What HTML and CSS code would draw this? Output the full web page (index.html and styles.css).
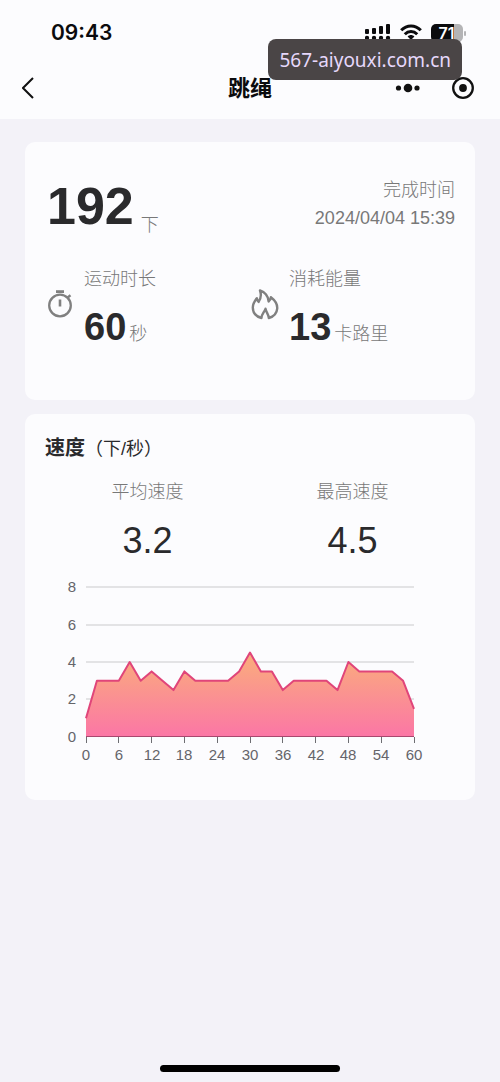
FILE: index.html
```html
<!DOCTYPE html>
<html lang="zh-CN">
<head>
<meta charset="utf-8">
<meta name="viewport" content="width=device-width, initial-scale=1">
<title>跳绳</title>
<link rel="stylesheet" href="styles.css">
</head>
<body>
<div class="screen">
  <header class="header">
    <div class="status">
      <span class="time">09:43</span>
      <div class="status-icons">
        <svg class="signal" width="26" height="18" viewBox="0 0 26 18" aria-hidden="true">
          <g fill="#0b0b0d">
            <rect x="0" y="5" width="4" height="5" rx="1"/><rect x="7" y="4" width="4" height="6" rx="1"/><rect x="14" y="2" width="4" height="8" rx="1"/><rect x="21" y="0" width="4" height="10" rx="1"/>
            <circle cx="2" cy="14" r="2.200"/><circle cx="9" cy="14" r="2.200"/><circle cx="16" cy="14" r="2.200"/><circle cx="23" cy="14" r="2.200"/>
          </g>
        </svg>
        <svg class="wifi" width="22" height="18" viewBox="0 0 22 18" aria-hidden="true">
          <g fill="none" stroke="#0b0b0d" stroke-width="3">
            <path d="M1.200 6.300C6.800.4 15.200.4 20.800 6.300"/><path d="M4.800 10.300c3.600-3.700 8.800-3.700 12.400 0"/>
          </g>
          <path d="M7.600 12.600c2-2 4.800-2 6.800 0L11 16z" fill="#0b0b0d"/>
        </svg>
        <span class="battery"><span class="battery-level">71</span></span>
      </div>
    </div>
    <nav class="nav">
      <button class="icon-button" type="button" aria-label="返回">
        <svg width="14" height="24" viewBox="0 0 14 24"><path d="M11 2 1 12l10 10" fill="none" stroke="#111" stroke-width="2"/></svg>
      </button>
      <h1 class="title">跳绳</h1>
      <div class="capsule">
        <button class="icon-button" type="button" aria-label="更多">
          <svg width="26" height="24" viewBox="0 0 26 24" fill="#111"><circle cx="3.500" cy="12" r="2.600"/><circle cx="13" cy="12" r="4.300"/><circle cx="22" cy="12" r="2.600"/></svg>
        </button>
        <button class="icon-button" type="button" aria-label="关闭">
          <svg width="24" height="24" viewBox="0 0 24 24"><circle cx="12" cy="12" r="9.800" fill="none" stroke="#111" stroke-width="2.300"/><circle cx="12" cy="12" r="3.900" fill="#111"/></svg>
        </button>
      </div>
    </nav>
    <div class="site-tag">567-aiyouxi.com.cn</div>
  </header>

  <main class="content">
    <section class="card summary">
      <div class="summary-top">
        <p class="count"><strong class="count-number">192</strong><span class="count-unit">下</span></p>
        <div class="finish"><p>完成时间</p><p>2024/04/04 15:39</p></div>
      </div>
      <div class="columns">
        <div class="stat">
          <svg class="stat-icon" width="30" height="34" viewBox="0 0 30 34" fill="none" stroke="#808080" aria-hidden="true">
            <circle cx="15" cy="19.500" r="10.800" stroke-width="2.300"/><path d="M11 5.600h8" stroke-width="2.800"/><path d="M15 13.500v7" stroke-width="2.600"/><path d="M22 12l3.500-2.700" stroke-width="2.400"/>
          </svg>
          <div><p class="label">运动时长</p><p class="amount"><strong>60</strong><span>秒</span></p></div>
        </div>
        <div class="stat">
          <svg class="stat-icon" width="30" height="34" viewBox="0 0 30 34" fill="none" stroke="#808080" stroke-width="2.400" stroke-linejoin="round" stroke-linecap="round" aria-hidden="true">
            <path d="M11.500 32C6 30.500 2.800 26.500 2.800 21.500c0-3.700 1.800-6.500 4-9.300.2 1.800.8 2.900 1.800 3.700C11 12.500 11.400 8.500 10 4.500c4.800 1.500 8.400 5.700 8.600 11 1.200-.9 2-2.200 2.300-4.200 4.200 3.200 6.700 6.800 6.300 11.400-.4 4.900-3.700 8.100-8.400 9.300 0-3.500-2.600-5.500-3.300-9.200-1.300 3.500-4.200 5.500-4 9.200z"/>
          </svg>
          <div><p class="label">消耗能量</p><p class="amount"><strong>13</strong><span>卡路里</span></p></div>
        </div>
      </div>
    </section>

    <section class="card speed">
      <h2 class="heading">速度<span>（下/秒）</span></h2>
      <div class="columns centered">
        <div><p class="label">平均速度</p><p class="value">3.2</p></div>
        <div><p class="label">最高速度</p><p class="value">4.5</p></div>
      </div>
      <svg class="chart" viewBox="0 0 410 200" role="img" aria-label="速度曲线">
        <defs><linearGradient id="fill" gradientUnits="userSpaceOnUse" x1="0" y1="78" x2="0" y2="162"><stop offset="0" stop-color="#faae7b"/><stop offset="1" stop-color="#fb76a6"/></linearGradient></defs>
        <path class="grid" d="M41 12h328M41 50h328M41 87h328M41 124h328"/>
        <path fill="url(#fill)" d="M41 162V143.300L51.900 105.800H73.800L84.700 87L95.700 105.800L106.600 96.400L117.500 105.800L128.500 115.100L139.400 96.400L150.300 105.800H183.100L194.100 96.400L205 77.600L215.900 96.400H226.900L237.800 115.100L248.700 105.800H281.500L292.500 115.100L303.400 87L314.300 96.400H347.100L358.100 105.800L369 133.900V162z"/>
        <path class="line" d="M41 143.300L51.900 105.800H73.800L84.700 87L95.700 105.800L106.600 96.400L117.500 105.800L128.500 115.100L139.400 96.400L150.300 105.800H183.100L194.100 96.400L205 77.600L215.900 96.400H226.900L237.800 115.100L248.700 105.800H281.500L292.500 115.100L303.400 87L314.300 96.400H347.100L358.100 105.800L369 133.900"/>
        <path class="axis" d="M41 161.500h328"/>
        <path class="ticks" d="M41.500 162v6M73.500 162v6M106.500 162v6M139.500 162v6M172.500 162v6M205.500 162v6M237.500 162v6M270.500 162v6M303.500 162v6M336.500 162v6M369.500 162v6"/>
        <g class="y-labels"><text x="31" y="17">8</text><text x="31" y="55">6</text><text x="31" y="92">4</text><text x="31" y="129">2</text><text x="31" y="167">0</text></g>
        <g class="x-labels"><text x="41" y="185">0</text><text x="74" y="185">6</text><text x="107" y="185">12</text><text x="139" y="185">18</text><text x="172" y="185">24</text><text x="205" y="185">30</text><text x="238" y="185">36</text><text x="271" y="185">42</text><text x="303" y="185">48</text><text x="336" y="185">54</text><text x="369" y="185">60</text></g>
      </svg>
    </section>
  </main>
  <div class="home-bar"></div>
</div>
</body>
</html>
```
FILE: styles.css
```css
* { box-sizing: border-box; }
body {
  margin: 0;
  background: #f3f2f8;
  color: #2a2a2c;
  font-family: "Liberation Sans", "Noto Sans CJK SC", sans-serif;
}
h1, h2, p { margin: 0; }
.screen { min-height: 100vh; display: flex; flex-direction: column; }
.header { position: relative; padding-bottom: 9px; background: #fcfcfe; color: #0b0b0d; }
.status { height: 66px; padding: 0 37px 0 51px; display: flex; align-items: center; justify-content: space-between; }
.time { font: 600 21px/24px Inter, sans-serif; }
.status-icons { display: flex; align-items: center; gap: 9px; }
.battery {
  position: relative;
  width: 32px;
  height: 18px;
  padding-right: 1px;
  border-radius: 5px;
  background: linear-gradient(to right, #0b0b0d 72%, #b4b4b6 72%);
  color: #fff;
  text-align: center;
  font: 600 16px/18px Inter, sans-serif;
}
.battery::after { content: ""; position: absolute; left: 33px; top: 7px; width: 2px; height: 5px; border-radius: 1px; background: #b4b4b6; }
.nav { height: 44px; padding: 0 22px; display: grid; grid-template-columns: 1fr auto 1fr; align-items: center; }
.icon-button { padding: 0; border: 0; background: none; display: flex; justify-self: start; }
.title { padding-top: 2px; font-size: 22px; line-height: 32px; font-weight: 700; }
.capsule { justify-self: end; margin-right: 3px; display: flex; gap: 30px; }
.site-tag {
  position: absolute;
  top: 39px;
  right: 38px;
  padding: 8px 11px 6px;
  border-radius: 8px;
  background: #4a4546;
  color: #e6d8fb;
  font: 19px/27px "Noto Sans", sans-serif;
}
.content { padding: 23px 25px; display: grid; gap: 14px; }
.card { padding: 0 20px; border-radius: 10px; background: #fcfcfe; }
.summary { padding-top: 34px; padding-bottom: 42px; }
.summary-top { display: flex; justify-content: space-between; color: #787878; font-size: 18px; line-height: 28px; font-weight: 300; }
.count { display: flex; align-items: flex-end; gap: 7px; padding-left: 2px; }
.count-number { color: #2a2a2c; font-size: 52px; line-height: 60px; font-weight: 700; }
.count-unit { line-height: 22px; }
.finish { text-align: right; }
.columns { display: grid; grid-template-columns: 1fr 1fr; }
.stat { display: flex; gap: 9px; padding-top: 30px; }
.stat-icon { margin-top: 20px; }
.label { color: #787878; font-size: 18px; line-height: 26px; font-weight: 300; }
.amount { display: flex; align-items: baseline; gap: 3px; margin-top: 11px; color: #787878; font-size: 18px; line-height: 48px; font-weight: 300; }
.amount strong { color: #2a2a2c; font-size: 38px; font-weight: 700; }
.speed { padding-top: 20px; padding-bottom: 25px; }
.heading { font-size: 20px; line-height: 28px; font-weight: 700; }
.heading span { font-size: 18px; font-weight: 400; }
.centered { text-align: center; padding-top: 16px; }
.value { font-size: 36px; line-height: 42px; margin-top: 15px; }
.chart { display: block; width: 100%; height: auto; margin-top: 13px; }
.grid { stroke: #e3e3e5; stroke-width: 2; }
.line { fill: none; stroke: #e0457a; stroke-width: 2; stroke-linejoin: round; }
.axis { stroke: #a8486e; stroke-width: 1; }
.ticks { stroke: #6e6e72; stroke-width: 1; }
.chart text { fill: #65656a; font-size: 15px; }
.y-labels { text-anchor: end; }
.x-labels { text-anchor: middle; }
.home-bar { width: 36%; height: 7px; margin: auto auto 10px; border-radius: 4px; background: #000; }
```
